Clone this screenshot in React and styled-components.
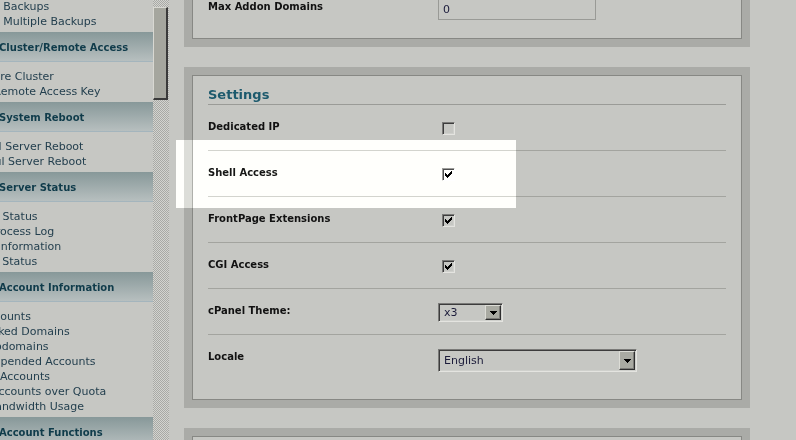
import styled, { createGlobalStyle } from 'styled-components';

const GlobalStyle = createGlobalStyle`
  html, body {
    margin: 0;
    padding: 0;
    background: #c6c7c3;
    overflow: hidden;
  }
  body {
    font-family: "DejaVu Sans", Verdana, sans-serif;
  }
`;

const Page = styled.div`
  position: relative;
  display: flex;
  width: 796px;
  height: 440px;
  overflow: hidden;
  background: #c6c7c3;
`;

// Left navigation (scrolled sideways, so text is clipped on the left)
const Sidebar = styled.nav`
  flex: none;
  width: 153px;
  overflow: hidden;
`;

const SidebarInner = styled.div`
  width: 195px;
  margin: -8px 0 0 -42px;
`;

const SectionHeader = styled.div`
  display: flex;
  align-items: center;
  height: 30px;
  box-sizing: border-box;
  padding: 1px 0 0 41px;
  border-bottom: 1px solid #a4b5bd;
  background: linear-gradient(#879899, #b7bfbf);
  font-size: 10px;
  font-weight: bold;
  color: #0f3b4a;
  white-space: nowrap;
`;

const ItemList = styled.ul`
  list-style: none;
  margin: 0;
  padding: 7px 0 3px;
`;

const Item = styled.li`
  font-size: 11px;
  line-height: 15px;
  color: #233f4e;
  white-space: nowrap;
`;

const ScrollTrack = styled.div`
  flex: none;
  width: 16px;
  padding-top: 7px;
  box-sizing: border-box;
  background: repeating-conic-gradient(#a8a9a5 0 25%, #d3d4d0 0 50%) 0 0 / 2px 2px;
`;

const ScrollThumb = styled.div`
  width: 15px;
  height: 93px;
  box-sizing: border-box;
  background: #a5a69e;
  border-top: 1px solid #d8d8d2;
  border-left: 1px solid #d8d8d2;
  border-right: 2px solid #3a3a3a;
  border-bottom: 2px solid #3a3a3a;
`;

// Main content
const Main = styled.main`
  flex: 1;
  display: flex;
  flex-direction: column;
  gap: 20px;
  margin-top: -24px;
  padding-left: 15px;
`;

const Panel = styled.section`
  flex: none;
  width: 566px;
  box-sizing: border-box;
  border: 8px solid #aaaba7;
`;

const PanelBody = styled.div`
  border: 1px solid #878884;
  padding: 0 15px ${(p) => p.$pb}px;
  min-height: ${(p) => p.$minH || 0}px;
`;

const Heading = styled.h2`
  margin: 0;
  padding: 10px 0 1px;
  font-size: 13px;
  line-height: 17px;
  font-weight: bold;
  color: #1d5a6d;
  border-bottom: 1px solid #9a9b97;
`;

const Row = styled.div`
  display: flex;
  align-items: flex-start;
  height: 46px;
  box-sizing: border-box;
  padding-top: 14px;
  border-bottom: ${(p) => (p.$last ? 'none' : '1px solid #a3a49f')};
`;

const Label = styled.div`
  flex: none;
  width: 230px;
  padding-top: 1px;
  font-size: 10px;
  line-height: 14px;
  font-weight: bold;
  color: #111;
`;

const TextInput = styled.div`
  width: 158px;
  height: 22px;
  box-sizing: border-box;
  margin-top: -1px;
  padding: 1px 4px 0;
  border: 1px solid #999a96;
  font-size: 11px;
  line-height: 20px;
  color: #1b1b3b;
`;

const CheckBox = styled.span`
  display: block;
  width: 13px;
  height: 13px;
  box-sizing: border-box;
  margin: 3px 0 0 4px;
  border-top: 1px solid #7a7a78;
  border-left: 1px solid #7a7a78;
  border-right: 1px solid #e4e4e0;
  border-bottom: 1px solid #e4e4e0;
  box-shadow: inset 1px 1px 0 #3c3c3c, inset -1px -1px 0 #cfd0cc;
  padding: 2px 0 0 2px;

  svg {
    display: block;
  }
`;

const Select = styled.div`
  display: flex;
  width: ${(p) => p.$w}px;
  height: ${(p) => p.$h}px;
  box-sizing: border-box;
  border-top: 1px solid #7a7a78;
  border-left: 1px solid #7a7a78;
  border-right: 1px solid #e4e4e0;
  border-bottom: 1px solid #e4e4e0;
  box-shadow: inset 1px 1px 0 #3c3c3c, inset -1px -1px 0 #cfd0cc;
  padding: 1px;
`;

const SelectValue = styled.span`
  flex: 1;
  padding: 1px 0 0 4px;
  font-size: 11px;
  line-height: ${(p) => p.$h - 5}px;
  color: #1c1c3a;
`;

const SelectButton = styled.span`
  display: flex;
  align-items: center;
  justify-content: center;
  flex: none;
  width: 16px;
  box-sizing: border-box;
  background: #a9aaa2;
  border-top: 1px solid #dcdcd6;
  border-left: 1px solid #dcdcd6;
  border-right: 1px solid #2e2e2e;
  border-bottom: 1px solid #2e2e2e;
  box-shadow: inset -1px -1px 0 #7c7c78;
`;

// Screenshot highlight laid over the Shell Access row
const Highlight = styled.div`
  position: absolute;
  left: 176px;
  top: 140px;
  width: 340px;
  height: 68px;
  background: rgb(58, 58, 58);
  mix-blend-mode: color-dodge;
  pointer-events: none;
`;

const CHECK_PIXELS = [
  [6], [5, 6], [0, 4, 5, 6], [0, 1, 3, 4, 5], [0, 1, 2, 3, 4], [1, 2, 3], [2],
];

function Check() {
  return (
    <svg width='7' height='7' viewBox='0 0 7 7' shapeRendering='crispEdges'>
      {CHECK_PIXELS.map((xs, y) =>
        xs.map((x) => <rect key={`${x}-${y}`} x={x} y={y} width='1' height='1' fill='#000' />)
      )}
    </svg>
  );
}

function Arrow() {
  return (
    <svg width='7' height='4' viewBox='0 0 7 4' shapeRendering='crispEdges'>
      <rect x='0' y='0' width='7' height='1' fill='#000' />
      <rect x='1' y='1' width='5' height='1' fill='#000' />
      <rect x='2' y='2' width='3' height='1' fill='#000' />
      <rect x='3' y='3' width='1' height='1' fill='#000' />
    </svg>
  );
}

const SECTIONS = [
  { items: ['Restore Backups', 'Restore Multiple Backups'] },
  { title: 'Cluster/Remote Access', items: ['Configure Cluster', 'Setup Remote Access Key'] },
  { title: 'System Reboot', items: ['Forceful Server Reboot', 'Graceful Server Reboot'] },
  {
    title: 'Server Status',
    items: ['Apache Status', 'Daily Process Log', 'Server Information', 'Service Status'],
  },
  {
    title: 'Account Information',
    items: [
      'List Accounts',
      'List Parked Domains',
      'List Subdomains',
      'List Suspended Accounts',
      'Locked Accounts',
      'Show Accounts over Quota',
      'View Bandwidth Usage',
    ],
  },
  { title: 'Account Functions', items: ['Create a New Account'] },
];

const SETTINGS = [
  { label: 'Dedicated IP', checked: false },
  { label: 'Shell Access', checked: true },
  { label: 'FrontPage Extensions', checked: true },
  { label: 'CGI Access', checked: true },
];

export default function App() {
  return (
    <Page>
      <GlobalStyle />
      <Sidebar>
        <SidebarInner>
          {SECTIONS.map((section, i) => (
            <div key={i}>
              {section.title && <SectionHeader>{section.title}</SectionHeader>}
              <ItemList>
                {section.items.map((item) => (
                  <Item key={item}>{item}</Item>
                ))}
              </ItemList>
            </div>
          ))}
        </SidebarInner>
      </Sidebar>

      <ScrollTrack>
        <ScrollThumb />
      </ScrollTrack>

      <Main>
        <Panel>
          <PanelBody $pb={7}>
            <Row $last>
              <Label>Max Addon Domains</Label>
              <TextInput>0</TextInput>
            </Row>
          </PanelBody>
        </Panel>

        <Panel>
          <PanelBody $pb={18}>
            <Heading>Settings</Heading>
            {SETTINGS.map((s) => (
              <Row key={s.label}>
                <Label>{s.label}</Label>
                <CheckBox>{s.checked && <Check />}</CheckBox>
              </Row>
            ))}
            <Row>
              <Label>cPanel Theme:</Label>
              <Select $w={65} $h={19}>
                <SelectValue $h={19}>x3</SelectValue>
                <SelectButton>
                  <Arrow />
                </SelectButton>
              </Select>
            </Row>
            <Row $last>
              <Label>Locale</Label>
              <Select $w={199} $h={23}>
                <SelectValue $h={23}>English</SelectValue>
                <SelectButton>
                  <Arrow />
                </SelectButton>
              </Select>
            </Row>
          </PanelBody>
        </Panel>

        <Panel>
          <PanelBody $pb={0} $minH={60}>
            <Heading>Resources</Heading>
          </PanelBody>
        </Panel>
      </Main>

      <Highlight />
    </Page>
  );
}
